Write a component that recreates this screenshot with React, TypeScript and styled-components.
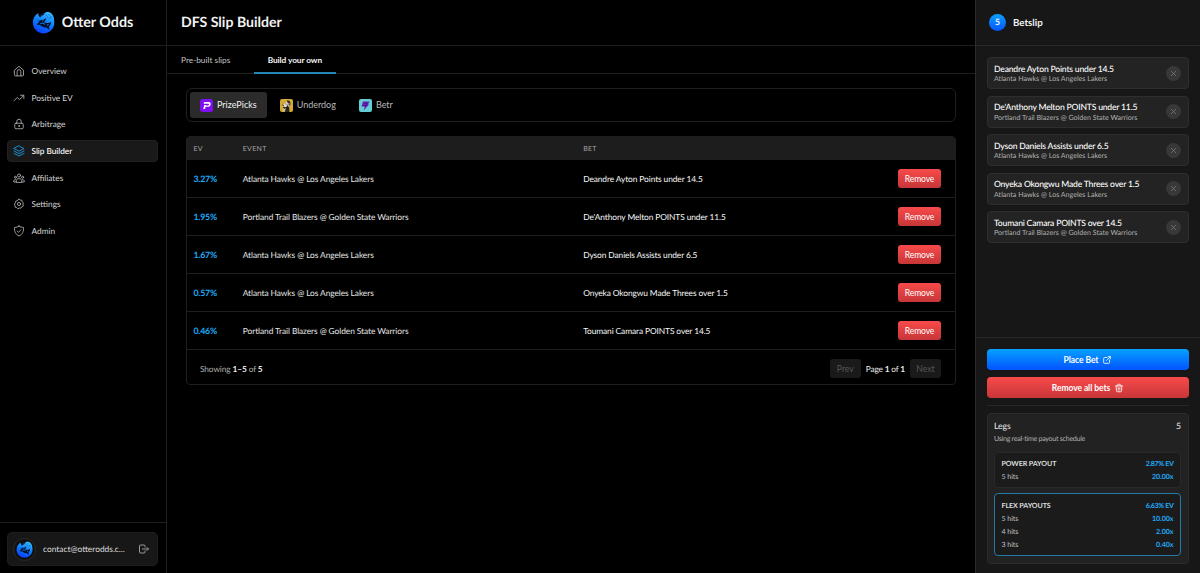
import React from "react";
import styled, { createGlobalStyle, css } from "styled-components";
import { TbLogout, TbTrash, TbExternalLink, TbX } from "react-icons/tb";

const Global = createGlobalStyle`
  * { box-sizing: border-box; }
  html, body { margin: 0; background: #000; overflow: hidden; }
  body {
    font-family: Lato, "Liberation Sans", sans-serif;
    font-size: 8.3px;
    line-height: 12px;
    color: #e5e5e5;
    text-rendering: geometricPrecision;
  }
  button { font: inherit; color: inherit; border: 0; padding: 0; margin: 0; background: none; }
`;

const Shell = styled.div`
  display: grid;
  grid-template-columns: 167px 1fr 225px;
  height: 573px;
  background: #000;
  white-space: nowrap;
`;

const line = "#1f1f1f";

/* Sidebar */

const Sidebar = styled.aside`
  display: flex;
  flex-direction: column;
  border-right: 1px solid ${line};
`;

const Brand = styled.div`
  height: 46px;
  display: flex;
  align-items: center;
  justify-content: center;
  gap: 7px;
  padding-right: 1px;
  border-bottom: 1px solid ${line};
  font-size: 14.3px;
  font-weight: 700;
  color: #f2f2f2;
  svg { margin-bottom: 1px; }
`;

const Nav = styled.nav`
  flex: 1;
  display: flex;
  flex-direction: column;
  gap: 4.7px;
  padding: 14px 8px 0 7px;
`;

const NavItem = styled.a<{ $active?: boolean }>`
  height: 22px;
  display: flex;
  align-items: center;
  gap: 7px;
  padding: 0 4.5px;
  border: 1px solid transparent;
  border-radius: 4px;
  color: #d6d6d6;
  svg { width: 12px; height: 12px; color: #b4b4b4; }
  ${(p) =>
    p.$active &&
    css`
      background: #191919;
      border-color: #212121;
      color: #fff;
      font-weight: 500;
      letter-spacing: -0.05px;
      svg { color: #1ba4ee; }
    `}
`;

const SideFooter = styled.div`
  height: 51px;
  padding: 9px 8px 7px 7px;
  border-top: 1px solid ${line};
`;

const Account = styled.div`
  height: 34px;
  display: flex;
  align-items: center;
  padding: 0 7px 0 5px;
  border: 1px solid #1e1e1e;
  border-radius: 5px;
  background: #171717;
  color: #dcdcdc;
  > svg { width: 12px; height: 12px; color: #9a9a9a; }
`;

const Avatar = styled.div`
  width: 23px;
  height: 23px;
  display: grid;
  place-items: center;
  border: 1px solid #2b2b2b;
  border-radius: 50%;
  background: #101010;
`;

const Email = styled.span`
  flex: 1;
  padding-left: 7px;
  font-size: 8.4px;
`;

/* Main column */

const Main = styled.main`
  min-width: 0;
  display: flex;
  flex-direction: column;
`;

const PageHeader = styled.header`
  height: 46px;
  display: flex;
  align-items: center;
  padding-left: 14px;
  border-bottom: 1px solid ${line};
  font-size: 14.1px;
  font-weight: 700;
  color: #f2f2f2;
`;

const Tabs = styled.div`
  height: 28px;
  display: flex;
  gap: 9.3px;
  border-bottom: 1px solid ${line};
`;

const Tab = styled.button<{ $active?: boolean }>`
  height: 28px;
  padding: 2px 14px 0;
  border-bottom: 2px solid ${(p) => (p.$active ? "#2586b8" : "transparent")};
  color: ${(p) => (p.$active ? "#f5f5f5" : "#c4c4c4")};
  font-weight: ${(p) => (p.$active ? 700 : 400)};
  letter-spacing: ${(p) => (p.$active ? "-0.07px" : "0")};
`;

const Content = styled.div`
  padding: 14px 19px 0 19px;
  display: flex;
  flex-direction: column;
  gap: 14px;
`;

const Books = styled.div`
  height: 34px;
  display: flex;
  align-items: center;
  gap: 3px;
  padding: 0 3px;
  border: 1px solid ${line};
  border-radius: 6px;
`;

const Book = styled.button<{ $active?: boolean }>`
  height: 26px;
  display: flex;
  align-items: center;
  gap: 4px;
  padding: 0 10px;
  border-radius: 3px;
  font-size: 9px;
  background: ${(p) => (p.$active ? "#2b2b2b" : "transparent")};
  color: ${(p) => (p.$active ? "#f0f0f0" : "#b8b8b8")};
  svg { width: 13px; height: 13px; }
`;

const TableBox = styled.section`
  height: 249px;
  border: 1px solid ${line};
  border-radius: 4px;
  overflow: hidden;
`;

const rowGrid = css`
  display: grid;
  grid-template-columns: 49.4px 340.4px 1fr auto;
  align-items: center;
  padding: 0 14px 0 6.4px;
  border-bottom: 1px solid ${line};
`;

const HeadRow = styled.div`
  ${rowGrid}
  height: 23px;
  padding-top: 2px;
  background: #1d1d1d;
  font-size: 7px;
  letter-spacing: 0.3px;
  color: #a6a6a6;
`;

const Row = styled.div`
  ${rowGrid}
  height: 38px;
  font-size: 8.4px;
  letter-spacing: -0.1px;
`;

const Ev = styled.span`
  font-weight: 700;
  color: #1eaaf8;
`;

const RowEv = styled(Ev)`
  font-size: 8.8px;
  letter-spacing: -0.2px;
`;

const EventName = styled.span`
  letter-spacing: -0.08px;
`;

const Bet = styled.span`
  color: #f8f8f8;
`;

const danger = "linear-gradient(#f84a4a, #c73638)";

const RemoveButton = styled.button`
  width: 43px;
  height: 19px;
  border-radius: 3px;
  background: ${danger};
  color: #fff;
  font-size: 8.5px;
  letter-spacing: -0.1px;
`;

const TableFooter = styled.div`
  height: 36px;
  display: flex;
  align-items: center;
  gap: 5px;
  padding: 1px 14px 0 13px;
  letter-spacing: -0.1px;
  color: #b0b0b0;
  b { color: #ededed; }
`;

const Spacer = styled.span`
  flex: 1;
`;

const PageInfo = styled.span`
  letter-spacing: -0.16px;
  color: #ededed;
`;

const PageButton = styled.button`
  width: 31px;
  height: 19px;
  border-radius: 3px;
  background: #1a1a1a;
  color: #565656;
  font-size: 8.6px;
`;

/* Betslip */

const Slip = styled.aside`
  display: flex;
  flex-direction: column;
  border-left: 1px solid #2a2a2a;
  background: #171717;
`;

const SlipHeader = styled.header`
  height: 46px;
  display: flex;
  align-items: center;
  gap: 7px;
  padding-left: 13px;
  border-bottom: 1px solid #2a2a2a;
  font-size: 9.7px;
  font-weight: 700;
  color: #f2f2f2;
`;

const Count = styled.span`
  width: 17px;
  height: 17px;
  margin-bottom: 1px;
  display: grid;
  place-items: center;
  border-radius: 50%;
  background: linear-gradient(#0aa0ff, #0554ff);
  font-size: 8.6px;
`;

const SlipList = styled.div`
  flex: 1;
  display: flex;
  flex-direction: column;
  gap: 6.5px;
  padding: 11px 11px 0 11px;
`;

const SlipCard = styled.div`
  height: 32px;
  display: flex;
  align-items: center;
  justify-content: space-between;
  padding: 2px 7px 0 6px;
  border: 1px solid #2e2e2e;
  border-radius: 4px;
  background: #232323;
`;

const SlipTitle = styled.div`
  line-height: 10.5px;
  font-size: 8.6px;
  letter-spacing: -0.2px;
  font-weight: 500;
  color: #fff;
`;

const SlipSub = styled.div`
  line-height: 10px;
  font-size: 7.1px;
  color: #b0b0b0;
`;

const Dismiss = styled.button`
  width: 15px;
  height: 15px;
  margin-bottom: 2px;
  display: grid;
  place-items: center;
  border-radius: 50%;
  background: #383838;
  color: #7c7c7c;
  svg { width: 9px; height: 9px; }
`;

const SlipFooter = styled.div`
  height: 236px;
  display: flex;
  flex-direction: column;
  padding: 11px 11px 9px 11px;
  border-top: 1px solid #262626;
`;

const Action = styled.button<{ $tone: "primary" | "danger" }>`
  flex: none;
  height: 21px;
  margin-bottom: 7px;
  display: flex;
  align-items: center;
  justify-content: center;
  gap: 4px;
  border-radius: 4px;
  background: ${(p) => (p.$tone === "danger" ? danger : "linear-gradient(#06a2ff, #0353ff)")};
  color: #fff;
  font-weight: 700;
  font-size: 8.5px;
  letter-spacing: -0.07px;
  svg { width: 10px; height: 10px; }
`;

const Divider = styled.div`
  flex: none;
  height: 8px;
  border-top: 1px solid #282828;
`;

const Legs = styled.section`
  flex: 1;
  padding: 5px 7px 0 6px;
  border: 1px solid #2b2b2b;
  border-radius: 4px;
  background: #222;
`;

const LegsTitle = styled.div`
  display: flex;
  justify-content: space-between;
  height: 14px;
  line-height: 14px;
  font-size: 8.7px;
  letter-spacing: -0.1px;
  color: #e8e8e8;
`;

const LegsNote = styled.div`
  height: 12px;
  line-height: 12px;
  font-size: 7.1px;
  letter-spacing: -0.28px;
  color: #b0b0b0;
`;

const Payout = styled.div<{ $selected?: boolean }>`
  margin-top: ${(p) => (p.$selected ? "5px" : "7px")};
  padding: ${(p) => (p.$selected ? "5px 6.5px" : "4.3px 6.5px")};
  border: 1px solid ${(p) => (p.$selected ? "#237ba5" : "#292929")};
  border-radius: 4px;
  background: #1b1b1b;
`;

const PayoutLine = styled.div<{ $head?: boolean }>`
  display: flex;
  justify-content: space-between;
  height: 12.8px;
  line-height: 13px;
  font-size: 7.1px;
  letter-spacing: -0.08px;
  font-weight: ${(p) => (p.$head ? 700 : 400)};
  color: ${(p) => (p.$head ? "#dedede" : "#c0c0c0")};
  ${Ev} { letter-spacing: ${(p) => (p.$head ? "-0.35px" : "-0.05px")}; }
`;

/* Artwork */

const OtterLogo = ({ size }: { size: number }) => (
  <svg width={size} height={size} viewBox="0 0 24 24">
    <defs>
      <linearGradient id={`otter${size}`} x1="0.75" y1="0" x2="0.35" y2="1">
        <stop offset="0" stopColor="#3cbcff" />
        <stop offset="0.5" stopColor="#0b7dff" />
        <stop offset="1" stopColor="#0a3dff" />
      </linearGradient>
    </defs>
    <path
      d="M7 2.200C3 4.200.8 8 .9 12.300 1.100 18.700 6 23.400 12 23.400S23.300 18.500 23.300 12.300C23.300 8.500 22.800 5 20.600 2.800 18.500.6 14 .5 12.600 2.900 10 2.600 8.600 4 8 6 6.700 5 6.300 3.800 7 2.200Z"
      fill={`url(#otter${size})`}
    />
    <path
      d="M6 8.500c.3 1.600 1 2.500 2.200 3.100-1.700.5-3 1.700-2.900 3.300 1.400-.9 2.700-.7 3.800.3 1.700 1.600 3.900 2.300 5.900 1.900l3.100 2.600-.4-3.600c1.500-1.200 2.200-3 2.100-5-1.300 1.300-2.500 1.700-4 1.400-1.600-.2-2.600-.6-3.700-.5l1.900-2 .6-2.600-2.300 1.700-3 .4-1 1C7.300 10.200 6.500 9.500 6 8.500Z"
      fill="#041024"
    />
    <path d="M8.600 13.300c1.800-.9 3.600-.4 5 .7M10.300 10.500l1.500-.2M15.500 14.800l1.800-.6" stroke="#168cff" strokeWidth="1" fill="none" />
    <path d="M8 6c1.200-1.600 2.600-2.400 4.300-2.500" stroke="#041024" strokeWidth="1.600" fill="none" />
    <path d="M14 3.800l1.500.8M17.500 3.300l1 1.200M20.500 6l-1.700.3M15.600 6.300l1.400.3M18 8l1.500-.4" stroke="#0a5cb0" strokeWidth=".8" />
  </svg>
);

const PrizePicksMark = () => (
  <svg viewBox="0 0 26 26">
    <rect width="26" height="26" rx="5" fill="#7f0df2" />
    <path d="M8 6h9.500c3.500 0 4.400 2.200 3.800 5-.6 3-2.500 4.600-5.600 4.600h-4.500L10 20H6.500l1.900-8h3.400l-.3 1.200h4c1.300 0 2-.8 2.200-1.900.3-1.300-.2-2-1.500-2H7.300Z" fill="#fff" />
  </svg>
);

const UnderdogMark = () => (
  <svg viewBox="0 0 26 26">
    <rect width="26" height="26" rx="4" fill="#d3aa32" />
    <path d="M15 2l5 3 1 6-3 3 1 12H9l3-9Z" fill="#26231d" />
    <path d="M13 5l3 3-1 5-3 3-6 0-2-3 6-4Z" fill="#e4e0d0" />
    <path d="M17 7l2 2-1 6-2 1ZM8 19l3-1-1 7H6Z" fill="#cfcabb" />
    <path d="M4 12l4 1M11 10l2 .5M6 16l5 1-1 2Z" stroke="#26231d" strokeWidth="1.600" />
  </svg>
);

const BetrMark = () => (
  <svg viewBox="0 0 26 26">
    <rect width="26" height="26" rx="4" fill="#62cdd2" />
    <path d="M8 5h13l-3 6h2L9 23l2.500-8H5Z" fill="#6a1fb4" />
    <path d="M11 9l6-.5M9 13h7" stroke="#2e1878" strokeWidth="1.600" />
  </svg>
);

const NavIcon = ({ children }: { children: React.ReactNode }) => (
  <svg viewBox="0 0 24 24" fill="none" stroke="currentColor" strokeWidth="1.700" strokeLinecap="round" strokeLinejoin="round">
    {children}
  </svg>
);

const icons = {
  home: (
    <NavIcon>
      <path d="M3 10.500 12 2.500l9 8V20a1.800 1.800 0 0 1-1.800 1.800H4.800A1.800 1.800 0 0 1 3 20Z" />
      <path d="M8.300 21.500V13a3.700 3.700 0 0 1 7.400 0v8.500" />
    </NavIcon>
  ),
  trend: (
    <NavIcon>
      <path d="M2 17.500l6.500-6.500 4.500 4L21.500 7M15 6.500h6.700V13" />
    </NavIcon>
  ),
  lock: (
    <NavIcon>
      <rect x="3.500" y="10.500" width="17" height="11" rx="2.500" />
      <path d="M7.500 10.500V7a4.500 4.500 0 0 1 9 0v3.500" />
      <circle cx="12" cy="16" r="1" />
    </NavIcon>
  ),
  stack: (
    <NavIcon>
      <path d="M12 2 22 7.200 12 12.400 2 7.200Z" />
      <path d="M2 12l10 5.200L22 12M2 16.800 12 22l10-5.200" />
    </NavIcon>
  ),
  group: (
    <NavIcon>
      <circle cx="12" cy="7" r="3" />
      <circle cx="4.800" cy="10.500" r="2" />
      <circle cx="19.200" cy="10.500" r="2" />
      <path d="M6.500 20v-2.500c0-2.500 2-4.300 5.500-4.300s5.500 1.800 5.500 4.300V20ZM6.500 20H1.500v-2c0-1.600 1-2.700 3.200-2.900M17.500 20h5v-2c0-1.600-1-2.700-3.200-2.900" />
    </NavIcon>
  ),
  gear: (
    <NavIcon>
      <path d="M12 2.300l2.600 1.900 3.200.3.800 3.100 2.200 2.400-.9 2.900.7 3.200-2.900 1.500-1.800 2.700-3.200-.3L9.600 21.500 7.300 19.200l-3.100-.9-.1-3.200L2.800 12l2-2.500.7-3.200 3.100-.8Z" />
      <circle cx="12" cy="12" r="3.200" />
    </NavIcon>
  ),
  shield: (
    <NavIcon>
      <path d="M12 2.200c2.800 1.800 5.700 2.600 9 2.700.5 8-2 14-9 17-7-3-9.500-9-9-17 3.300-.1 6.200-.9 9-2.700Z" />
      <path d="M8.300 12l2.700 2.600 4.800-5" />
    </NavIcon>
  ),
};

/* Data */

const nav = [
  { label: "Overview", icon: icons.home },
  { label: "Positive EV", icon: icons.trend },
  { label: "Arbitrage", icon: icons.lock },
  { label: "Slip Builder", icon: icons.stack, active: true },
  { label: "Affiliates", icon: icons.group },
  { label: "Settings", icon: icons.gear },
  { label: "Admin", icon: icons.shield },
];

const hawks = "Atlanta Hawks @ Los Angeles Lakers";
const blazers = "Portland Trail Blazers @ Golden State Warriors";

const bets = [
  { ev: "3.27%", event: hawks, bet: "Deandre Ayton Points under 14.5" },
  { ev: "1.95%", event: blazers, bet: "De'Anthony Melton POINTS under 11.5" },
  { ev: "1.67%", event: hawks, bet: "Dyson Daniels Assists under 6.5" },
  { ev: "0.57%", event: hawks, bet: "Onyeka Okongwu Made Threes over 1.5" },
  { ev: "0.46%", event: blazers, bet: "Toumani Camara POINTS over 14.5" },
];

const flex = [
  ["5 hits", "10.00x"],
  ["4 hits", "2.00x"],
  ["3 hits", "0.40x"],
];

export default function App() {
  return (
    <Shell>
      <Global />
      <Sidebar>
        <Brand>
          <OtterLogo size={23} />
          <span>Otter Odds</span>
        </Brand>
        <Nav>
          {nav.map(({ label, icon, active }) => (
            <NavItem key={label} $active={active}>
              {icon}
              {label}
            </NavItem>
          ))}
        </Nav>
        <SideFooter>
          <Account>
            <Avatar>
              <OtterLogo size={17} />
            </Avatar>
            <Email>contact@otterodds.c...</Email>
            <TbLogout />
          </Account>
        </SideFooter>
      </Sidebar>

      <Main>
        <PageHeader>DFS Slip Builder</PageHeader>
        <Tabs>
          <Tab>Pre-built slips</Tab>
          <Tab $active>Build your own</Tab>
        </Tabs>
        <Content>
          <Books>
            <Book $active>
              <PrizePicksMark />
              PrizePicks
            </Book>
            <Book>
              <UnderdogMark />
              Underdog
            </Book>
            <Book>
              <BetrMark />
              Betr
            </Book>
          </Books>
          <TableBox>
            <HeadRow>
              <span>EV</span>
              <span>EVENT</span>
              <span>BET</span>
            </HeadRow>
            {bets.map((b) => (
              <Row key={b.bet}>
                <RowEv>{b.ev}</RowEv>
                <EventName>{b.event}</EventName>
                <Bet>{b.bet}</Bet>
                <RemoveButton>Remove</RemoveButton>
              </Row>
            ))}
            <TableFooter>
              <span>
                Showing <b>1–5</b> of <b>5</b>
              </span>
              <Spacer />
              <PageButton>Prev</PageButton>
              <PageInfo>
                Page <b>1</b> of <b>1</b>
              </PageInfo>
              <PageButton>Next</PageButton>
            </TableFooter>
          </TableBox>
        </Content>
      </Main>

      <Slip>
        <SlipHeader>
          <Count>5</Count>
          Betslip
        </SlipHeader>
        <SlipList>
          {bets.map((b) => (
            <SlipCard key={b.bet}>
              <div>
                <SlipTitle>{b.bet}</SlipTitle>
                <SlipSub>{b.event}</SlipSub>
              </div>
              <Dismiss aria-label="Remove bet">
                <TbX />
              </Dismiss>
            </SlipCard>
          ))}
        </SlipList>
        <SlipFooter>
          <Action $tone="primary">
            Place Bet <TbExternalLink />
          </Action>
          <Action $tone="danger">
            Remove all bets <TbTrash />
          </Action>
          <Divider />
          <Legs>
            <LegsTitle>
              <span>Legs</span>
              <span>5</span>
            </LegsTitle>
            <LegsNote>Using real-time payout schedule</LegsNote>
            <Payout>
              <PayoutLine $head>
                <span>POWER PAYOUT</span>
                <Ev>2.87% EV</Ev>
              </PayoutLine>
              <PayoutLine>
                <span>5 hits</span>
                <Ev>20.00x</Ev>
              </PayoutLine>
            </Payout>
            <Payout $selected>
              <PayoutLine $head>
                <span>FLEX PAYOUTS</span>
                <Ev>6.63% EV</Ev>
              </PayoutLine>
              {flex.map(([hits, mult]) => (
                <PayoutLine key={hits}>
                  <span>{hits}</span>
                  <Ev>{mult}</Ev>
                </PayoutLine>
              ))}
            </Payout>
          </Legs>
        </SlipFooter>
      </Slip>
    </Shell>
  );
}
